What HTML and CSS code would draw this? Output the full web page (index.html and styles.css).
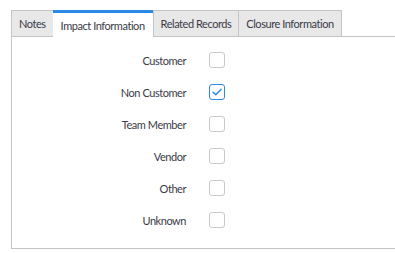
FILE: index.html
```html
<!DOCTYPE html>
<html>
<head>
  <meta name="viewport" content="width=device-width, initial-scale=1.0">
  <title>Impact Information</title>
  <link rel="stylesheet" href="styles.css">
</head>
<body>
  <div class="tabs">
    <div class="tab">Notes</div>
    <div class="tab tab-active">Impact Information</div>
    <div class="tab">Related Records</div>
    <div class="tab">Closure Information</div>
    <div class="tab-rest"></div>
  </div>
  <div class="panel">
    <div class="row">
      <label class="row-label">Customer</label>
      <span class="check"></span>
    </div>
    <div class="row">
      <label class="row-label">Non Customer</label>
      <span class="check check-on">
        <svg width="12" height="12" viewBox="0 0 12 12"><path d="M2 6.2 L4.8 8.8 L10 3.4" fill="none" stroke="#2b8ae8" stroke-width="1.5" stroke-linecap="round" stroke-linejoin="round"/></svg>
      </span>
    </div>
    <div class="row">
      <label class="row-label">Team Member</label>
      <span class="check"></span>
    </div>
    <div class="row">
      <label class="row-label">Vendor</label>
      <span class="check"></span>
    </div>
    <div class="row">
      <label class="row-label">Other</label>
      <span class="check"></span>
    </div>
    <div class="row">
      <label class="row-label">Unknown</label>
      <span class="check"></span>
    </div>
  </div>
</body>
</html>
```

FILE: styles.css
```css
body {
  margin: 0;
  padding: 10px 0 0 11px;
  background: #ffffff;
  font-family: 'Lato', sans-serif;
  font-size: 11px;
  letter-spacing: -0.45px;
  color: #3a3a48;
}
.tabs {
  display: flex;
  align-items: flex-end;
  height: 27px;
}
.tab {
  height: 25px;
  line-height: 25px;
  padding: 0 7px;
  background: #e8e8e8;
  border: 1px solid #c4c4c4;
  border-right: none;
}
.tab:nth-child(4) {
  border-right: 1px solid #c4c4c4;
}
.tab-active {
  height: 24px;
  line-height: 26px;
  background: #ffffff;
  border: none;
  border-top: 3px solid #2b8ae8;
  padding: 0 8px;
}
.tab-rest {
  flex: 1;
  border-bottom: 1px solid #c4c4c4;
}
.panel {
  border-left: 1px solid #c4c4c4;
  border-bottom: 1px solid #c4c4c4;
  height: 212px;
  padding-top: 7px;
  box-sizing: border-box;
}
.row {
  display: flex;
  align-items: center;
  height: 32px;
}
.row-label {
  width: 174px;
  text-align: right;
}
.check {
  display: flex;
  align-items: center;
  justify-content: center;
  width: 14px;
  height: 14px;
  margin-left: 23px;
  border: 1px solid #c8c8c8;
  border-radius: 3px;
}
.check-on {
  border-color: #2b8ae8;
}
```
